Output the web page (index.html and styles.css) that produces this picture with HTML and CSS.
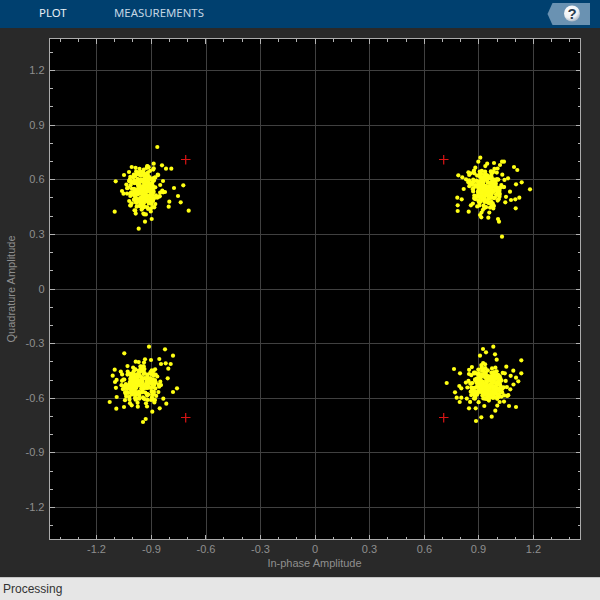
FILE: index.html
```html
<!DOCTYPE html>
<html lang="en">
<head>
<meta charset="utf-8">
<title>Constellation Diagram</title>
<link rel="stylesheet" href="styles.css">
</head>
<body>
<div class="app">
  <header class="toolstrip">
    <nav class="tabs">
      <span class="tab">PLOT</span>
      <span class="tab tab-dim">MEASUREMENTS</span>
    </nav>
    <div class="help">
      <svg class="help-icon" width="44" height="23" viewBox="0 0 44 23">
        <defs>
          <radialGradient id="ball" cx="0.4" cy="0.3" r="0.8">
            <stop offset="0" stop-color="#ffffff"/>
            <stop offset="0.6" stop-color="#eef1f4"/>
            <stop offset="1" stop-color="#8fa0b2"/>
          </radialGradient>
        </defs>
        <polygon class="help-bg" points="0.5,11 5.5,0 43,0 43,22 5.5,22"/>
        <circle cx="25" cy="10.5" r="8" fill="url(#ball)"/>
        <text class="help-q" x="25" y="16">?</text>
      </svg>
    </div>
  </header>
  <main class="plot">
    <svg class="plot-svg" width="600" height="549" viewBox="0 28 600 549">
      <rect class="axes-bg" x="49.5" y="38.5" width="531" height="501"/>
      <g id="grid"></g>
      <g id="ticks"></g>
      <path class="ref-mark" d="M181 159.5h9.500M185.700 155v9.500M439 159.500h9.500M443.700 155v9.500M181 417.500h9.500M185.700 413v9.500M439 417.500h9.500M443.700 413v9.500"/>
      <g id="dots"></g>
      <rect class="axes-frame" x="49.5" y="38.5" width="531" height="501"/>
      <g class="ylabels">
        <text x="44.5" y="74">1.2</text>
        <text x="44.5" y="129">0.9</text>
        <text x="44.5" y="183">0.6</text>
        <text x="44.5" y="238">0.3</text>
        <text x="44.5" y="293">0</text>
        <text x="44.5" y="347">-0.3</text>
        <text x="44.5" y="402">-0.6</text>
        <text x="44.5" y="456">-0.9</text>
        <text x="44.5" y="511">-1.2</text>
      </g>
      <g class="xlabels">
        <text x="96.5" y="553">-1.2</text>
        <text x="151.5" y="553">-0.9</text>
        <text x="206" y="553">-0.6</text>
        <text x="260.5" y="553">-0.3</text>
        <text x="315" y="553">0</text>
        <text x="369.5" y="553">0.3</text>
        <text x="424.5" y="553">0.6</text>
        <text x="478.5" y="553">0.9</text>
        <text x="533.5" y="553">1.2</text>
      </g>
      <text class="axis-title" x="314.5" y="567">In-phase Amplitude</text>
      <text class="axis-title" transform="translate(15 289) rotate(-90)">Quadrature Amplitude</text>
    </svg>
  </main>
  <footer class="status">Processing</footer>
</div>
<script src="plot.js"></script>
</body>
</html>
```
FILE: styles.css
```css
* { box-sizing: border-box; }
html, body { margin: 0; padding: 0; }
body { width: 600px; height: 600px; overflow: hidden; background: #292929; }
.app { display: flex; flex-direction: column; height: 600px; }
.toolstrip {
  height: 28px;
  flex: none;
  background: #00406f;
  display: flex;
  align-items: flex-start;
  justify-content: space-between;
  padding: 3px 10px 0 0;
}
.tabs { display: flex; gap: 47.5px; padding: 3px 0 0 39px; }
.tab { font: 11.4px/14px "Noto Sans", sans-serif; color: #e8f0f6; }
.tab-dim { color: #c4d6e4; }
.help { height: 23px; margin-right: -1px; }
.help-icon { display: block; }
.help-bg { fill: #6a92b2; }
.help-q { font: bold 15px "Liberation Sans", sans-serif; fill: #2c3e50; text-anchor: middle; }
.plot { flex: 1; min-height: 0; background: #292929; }
.plot-svg { display: block; }
.axes-bg { fill: #000; }
.axes-frame { fill: none; stroke: #ababab; stroke-width: 1; }
.gridline { stroke: #404040; stroke-width: 1; shape-rendering: crispEdges; }
.tick { stroke: #b4b4b4; stroke-width: 1; shape-rendering: crispEdges; }
.ref-mark { fill: none; stroke: #d81414; stroke-width: 1.2; }
.dot { fill: #ffff14; }
.ylabels text, .xlabels text, .axis-title { font: 11px "Liberation Sans", sans-serif; fill: #8f8f8f; }
.ylabels text { text-anchor: end; }
.xlabels text, .axis-title { text-anchor: middle; }
.status {
  height: 23px;
  flex: none;
  background: #e6e6e6;
  border-top: 1px solid #c4c4c4;
  padding-left: 3px;
  font: 12px/22px "Liberation Sans", sans-serif;
  color: #333;
}
```
FILE: plot.js
```js
(function () {
  var NS = 'http://www.w3.org/2000/svg';
  function add(parent, tag, cls, attrs) {
    var el = document.createElementNS(NS, tag);
    el.setAttribute('class', cls);
    for (var k in attrs) el.setAttribute(k, attrs[k]);
    document.getElementById(parent).appendChild(el);
  }
  function line(parent, cls, x1, y1, x2, y2) {
    add(parent, 'line', cls, { x1: x1, y1: y1, x2: x2, y2: y2 });
  }

  var L = 49.5, R = 580.5, T = 38.5, B = 539.5;
  var gx = [96.5, 151.5, 206.5, 260.5, 315.5, 369.5, 424.5, 478.5, 533.5];
  var gy = [70.5, 125.5, 179.5, 234.5, 289.5, 343.5, 398.5, 452.5, 507.5];
  gx.forEach(function (x) { line('grid', 'gridline', x, T, x, B); });
  gy.forEach(function (y) { line('grid', 'gridline', L, y, R, y); });

  var step = 18.21;
  for (var i = -2; i <= 26; i++) {
    var x = Math.round(96.5 + i * step - 0.5) + 0.5;
    if (x > L && x < R) {
      var lx = (i + 300) % 3 === 0 ? 5 : 3;
      line('ticks', 'tick', x, T, x, T + lx);
      line('ticks', 'tick', x, B - lx, x, B);
    }
    var y = Math.round(70.5 + i * step - 0.5) + 0.5;
    if (y > T && y < B) {
      var ly = (i + 300) % 3 === 0 ? 5 : 3;
      line('ticks', 'tick', L, y, L + ly, y);
      line('ticks', 'tick', R - ly, y, R, y);
    }
  }

  // Outlying samples, read off the reference
  var outer = [
    [157.3,147],[131.7,167],[162,165.3],[166,168.7],[171.3,168.7],[153.7,163.7],[153.7,168.3],[157.7,174.7],
    [115.7,181.3],[183.3,185.3],[174,188],[178,196],[180.7,202.3],[188.7,210.7],[114.7,211.7],[138.7,228.7],
    [168.7,206.7],[169.3,201.7],[145,221.7],[151.7,219],[124,175],[129,172],[163,181],[165,192],[122,191],
    [480.3,157.7],[478.3,161.7],[494,163],[502,161.7],[504,161.7],[500,165],[514,167],[517.3,170],[475.3,167.7],
    [458.3,175.3],[462.3,177.3],[466,179.3],[470.7,173.3],[508,178.3],[521.7,182.3],[516,184.3],[530,189.3],
    [463.7,189],[457.3,197.7],[461.7,199.3],[457.7,205.3],[457.7,211],[468.7,211.7],[519.3,197.7],[515.3,199.3],
    [511,200],[515.7,208.3],[502,236.7],[499,221.7],[498,219],[480,215],[481.3,217.3],[488.3,217.7],[505.3,202.3],[510,191.7],
    [149,346.7],[165,349.3],[124.3,353.3],[173,355.7],[159.3,359],[161,364],[165.7,363.3],[170.7,364],[168.3,368.7],
    [114.7,369.7],[112.7,375.7],[177,388.3],[173,392],[109.7,402],[116.3,408.7],[124,407],[166.3,403.7],[159.7,408.3],
    [145.7,419],[143,422],[152.3,411.7],[115,382],[116.7,397],[131.7,405.3],[163.3,398.7],[167.7,378.3],[135.7,361.7],[145,359.3],[151,360],
    [483,349],[493.3,346.7],[486,352.3],[495,354.3],[480,355.7],[521.3,360.3],[496.7,359.7],[454,369],[506.3,366.7],
    [513.3,370.7],[521.3,373.3],[460,373.3],[516,377.7],[518.3,381.3],[446.7,383],[459.3,386],[510.3,389.3],[455,392.3],
    [456.7,397.7],[461.3,397.7],[459.7,402],[509,406],[516,407],[469,408.3],[495.3,410.7],[481.3,417.3],[491.7,416.7],
    [476,421],[475.7,408.3],[484.3,406]
  ];

  // Dense noisy core of each cluster, from a fixed seed
  var s = 20240611;
  function rnd() {
    s = (s + 0x6D2B79F5) | 0;
    var t = Math.imul(s ^ (s >>> 15), 1 | s);
    t = (t + Math.imul(t ^ (t >>> 7), 61 | t)) ^ t;
    return ((t ^ (t >>> 14)) >>> 0) / 4294967296;
  }
  function gauss() {
    return Math.sqrt(-2 * Math.log(1 - rnd())) * Math.cos(2 * Math.PI * rnd());
  }
  var centres = [[143, 190, 10, 12.5], [485, 189, 11, 12.5], [140, 384, 12, 11.5], [487, 385, 13, 11]];
  var pts = outer.slice();
  centres.forEach(function (c) {
    var n = 0;
    while (n < 250) {
      var k = n < 110 ? 0.8 : 1;
      var dx = gauss(), dy = gauss();
      if (dx * dx + dy * dy > 4.2) continue;
      pts.push([c[0] + dx * c[2] * k, c[1] + dy * c[3] * k]);
      n++;
    }
  });
  pts.forEach(function (p) {
    add('dots', 'circle', 'dot', { cx: p[0].toFixed(1), cy: p[1].toFixed(1), r: 2.1 });
  });
})();
```
